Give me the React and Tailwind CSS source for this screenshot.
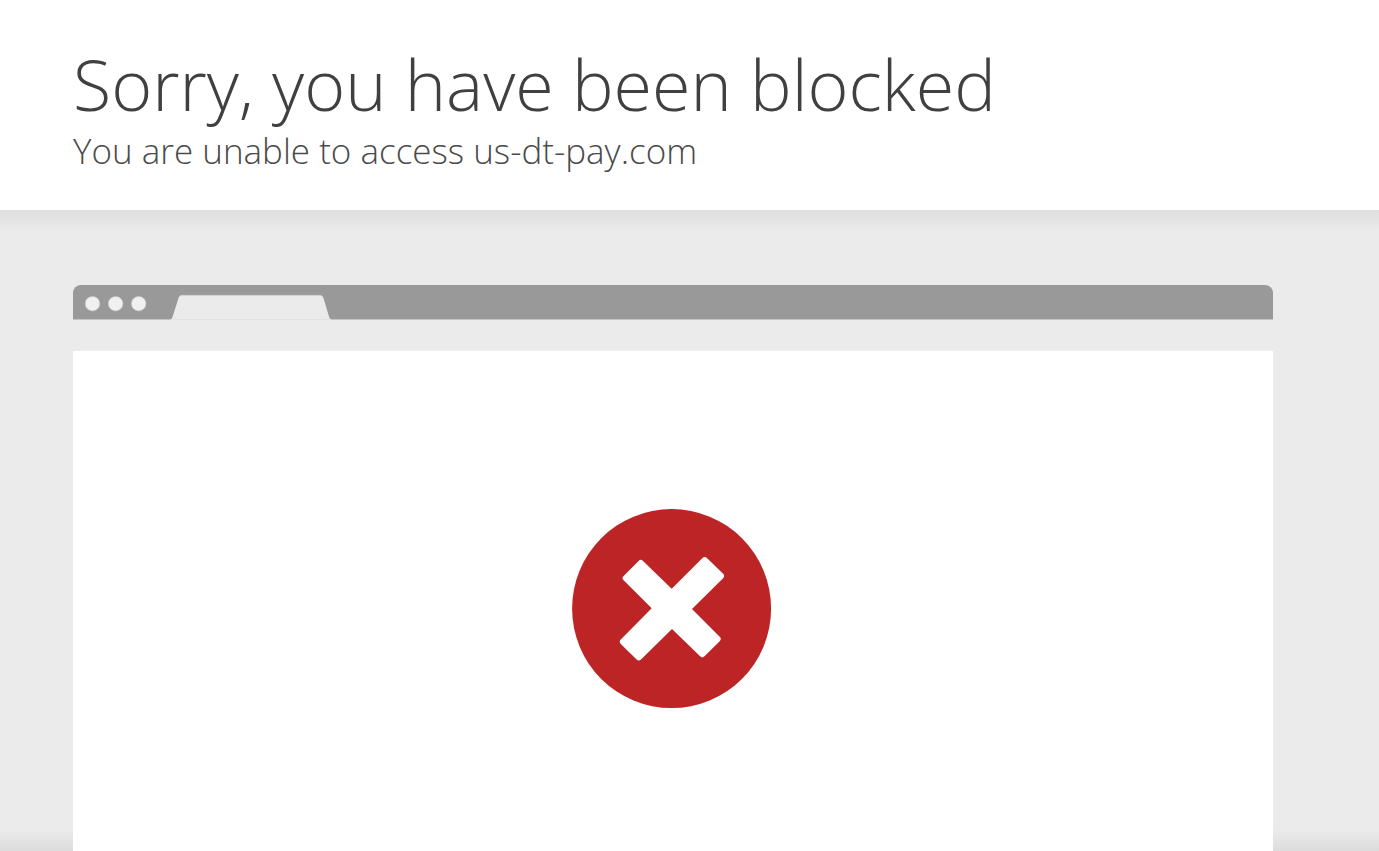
import React from 'react'

const BrowserBar = () => {
    return (
        <div className="flex h-[35px] rounded-t-lg border-b border-[#c4c4c4] bg-[#999999]">
            {/* window dots and the open tab */}
            <svg className="-mb-px h-[35px] w-[260px]" viewBox="0 0 260 35" aria-hidden="true">
                <g fill="#f0f0f0" stroke="#c4c4c4" strokeWidth="0.6">
                    <circle cx="19.5" cy="18.7" r="7.3" />
                    <circle cx="42.6" cy="18.7" r="7.3" />
                    <circle cx="65.7" cy="18.7" r="7.3" />
                </g>
                <path
                    d="M97 35Q98.700 34.600 99.500 32L105.200 14Q106.300 10.300 109 10.300H247Q249.500 10.300 250.600 13.500L256 31.500Q256.800 34.600 258.500 35Z"
                    fill="#ebebeb"
                />
                <path d="M105.500 13Q106.600 10.300 109 10.300H247Q249.300 10.300 250.300 13" fill="none" stroke="#d0d0d0" strokeWidth="0.7" />
                <path d="M98 34.500H258" stroke="#e1e1e1" />
            </svg>
        </div>
    )
}

const BlockedIcon = () => {
    return (
        <svg className="h-[200px] w-[202px]" viewBox="0 0 202 200" role="img" aria-label="Blocked">
            <circle cx="99.600" cy="99.600" r="99.500" fill="#bd2426" />
            <path
                d="M99.700 79.700L130.500 49.100Q132.700 46.900 134.900 49L151.100 64.800Q153.300 67 151.100 69.200L120 100L147.700 127.800Q149.900 130 147.700 132.200L132.500 147.300Q130.300 149.500 128.100 147.300L100 120L69 150.400Q66.800 152.600 64.600 150.400L48.800 134.900Q46.600 132.700 48.800 130.500L79.700 99.300L51.600 71.300Q49.400 69.100 51.600 66.900L66.600 51.900Q68.800 49.700 71 51.900Z"
                fill="#fff"
            />
        </svg>
    )
}

const App = () => {
    return (
        <div className="flex min-h-screen flex-col bg-white font-['Open_Sans',sans-serif] text-[#404040]">
            <header className="pt-10 pr-[106px] pb-9 pl-[73px]">
                <h1 className="text-[70px] leading-[88px] font-light">Sorry, you have been blocked</h1>
                <h2 className="text-[35px] leading-[46px] font-light text-[#4a4a4a]">You are unable to access us-dt-pay.com</h2>
            </header>

            {/* grey band, shaded along its top and bottom edge */}
            <main className="relative flex grow flex-col bg-[#ebebeb] pt-[75px] pr-[106px] pl-[73px]">
                <div className="absolute inset-x-0 top-0 h-5 bg-linear-to-b from-[#dedede] to-[#ebebeb]" />
                <div className="absolute inset-x-0 bottom-0 h-5 bg-linear-to-t from-[#dcdcdc] to-[#ebebeb]" />
                <BrowserBar />
                <div className="relative mt-[31px] flex grow justify-center bg-white pt-[158px] pb-[142px]">
                    <BlockedIcon />
                </div>
            </main>
        </div>
    )
}

export default App
